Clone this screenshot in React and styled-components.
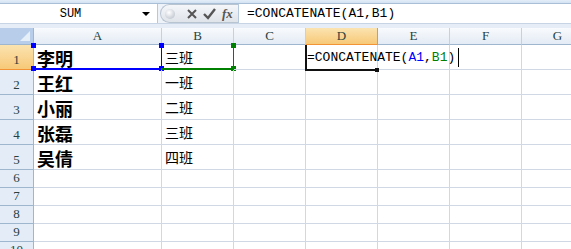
import React from "react";
import styled, { createGlobalStyle } from "styled-components";

const GlobalStyle = createGlobalStyle`
  * { margin: 0; padding: 0; box-sizing: border-box; }
  body { background: #ffffff; overflow: hidden; font-family: "Liberation Mono", monospace; }
`;

const Window = styled.div`
  width: 571px;
  height: 249px;
  overflow: hidden;
  background: #ffffff;
`;

const TopStrip = styled.div`
  height: 4px;
  background: linear-gradient(#e3edf8, #d3e2f3);
  border-bottom: 1px solid #a9bfd8;
`;

const FormulaBar = styled.div`
  display: flex;
  height: 20px;
  background: #eef3fa;
  border-bottom: 1px solid #c6d4e6;
`;

const NameBox = styled.div`
  position: relative;
  width: 158px;
  background: #ffffff;
  border-right: 1px solid #b6c8dd;
  display: flex;
  align-items: center;
  justify-content: center;
  padding-right: 16px;
  font-family: "Liberation Mono", monospace;
  font-size: 12px;
  color: #000;
`;

const DropArrow = styled.span`
  position: absolute;
  right: 7px;
  top: 8px;
  width: 0;
  height: 0;
  border-left: 4px solid transparent;
  border-right: 4px solid transparent;
  border-top: 4px solid #000;
`;

const ButtonPill = styled.div`
  width: 78px;
  margin-left: 2px;
  display: flex;
  align-items: center;
  gap: 5px;
  padding-left: 4px;
  background: linear-gradient(#f4f6f9, #dfe4ea);
  border: 1px solid #b9c4d1;
  border-right: none;
  border-radius: 10px 0 0 10px;
`;

const Knob = styled.span`
  width: 10px;
  height: 10px;
  border-radius: 50%;
  background: radial-gradient(circle at 40% 35%, #ffffff, #c9ced6 70%, #a7afba);
`;

const FxText = styled.span`
  font-family: "Liberation Serif", serif;
  font-style: italic;
  font-weight: bold;
  font-size: 13px;
  color: #555;
  margin-left: 1px;
`;

const FormulaInput = styled.div`
  flex: 1;
  background: #ffffff;
  border-left: 1px solid #b6c8dd;
  display: flex;
  align-items: center;
  padding-left: 8px;
  font-family: "Liberation Mono", monospace;
  font-size: 13px;
  color: #000;
`;

const Spacer = styled.div`
  height: 4px;
  background: #e6edf6;
`;

const Grid = styled.div`
  display: grid;
  grid-template-columns: 34px 128px repeat(6, 72px);
  grid-template-rows: 17px repeat(5, 25px) repeat(5, 18px);
`;

const ColHead = styled.div`
  display: flex;
  align-items: center;
  justify-content: center;
  font-family: "Liberation Serif", serif;
  font-size: 13px;
  color: #27413e;
  border-right: 1px solid ${(p) => (p.$sel ? "#f29436" : "#c5d1e0")};
  border-bottom: 1px solid ${(p) => (p.$sel ? "#f29436" : "#9eb6ce")};
  background: ${(p) =>
    p.$sel
      ? "linear-gradient(#fbe3b0, #f7c978)"
      : "linear-gradient(#f8fafd, #e4ebf5)"};
`;

const Corner = styled.div`
  position: relative;
  border-right: 1px solid #9eb6ce;
  border-bottom: 1px solid #9eb6ce;
  background: #b7cde9;
  &::after {
    content: "";
    position: absolute;
    right: 3px;
    bottom: 3px;
    border-left: 10px solid transparent;
    border-bottom: 10px solid #e6eef8;
  }
`;

const RowHead = styled.div`
  display: flex;
  align-items: flex-end;
  justify-content: center;
  padding-bottom: 1px;
  font-family: "Liberation Serif", serif;
  font-size: 13px;
  color: #27413e;
  border-right: 1px solid #9eb6ce;
  border-bottom: 1px solid ${(p) => (p.$sel ? "#f29436" : "#9eb6ce")};
  background: ${(p) =>
    p.$sel ? "linear-gradient(#fbe3b0, #f7c978)" : "#e4ecf7"};
`;

const Cell = styled.div`
  position: relative;
  display: flex;
  align-items: center;
  padding-left: 3px;
  border-right: 1px solid #d0d7e5;
  border-bottom: 1px solid #d0d7e5;
  white-space: nowrap;
  overflow: visible;
`;

const Name = styled.span`
  font-family: "Noto Sans CJK SC", sans-serif;
  font-weight: bold;
  font-size: 18px;
  line-height: 1;
  color: #000;
  margin-top: 2px;
`;

const Klass = styled.span`
  font-family: "Noto Sans CJK SC", sans-serif;
  font-size: 14px;
  line-height: 1;
  color: #000;
`;

const RefBox = styled.div`
  position: absolute;
  left: -1px;
  top: -1px;
  right: -1px;
  bottom: -1px;
  border-bottom: 2px solid ${(p) => p.$c};
  border-left: ${(p) => (p.$left ? `1px solid ${p.$c}` : "none")};
  border-right: ${(p) => (p.$right ? `1px solid ${p.$c}` : "none")};
  pointer-events: none;
`;

const Handle = styled.span`
  position: absolute;
  width: 5px;
  height: 5px;
  background: ${(p) => p.$c};
  ${(p) => (p.$top ? "top: -1px;" : "bottom: -3px;")}
  ${(p) => (p.$l ? "left: -2px;" : "right: -3px;")}
`;

const Editor = styled.div`
  position: absolute;
  left: -1px;
  top: 0;
  bottom: -2px;
  width: 70px;
  border-left: 2px solid #111;
  border-bottom: 2px solid #111;
  z-index: 2;
`;

const EditText = styled.span`
  position: absolute;
  left: 1px;
  top: 3px;
  font-family: "Liberation Mono", monospace;
  font-size: 13px;
  color: #000;
  z-index: 3;
  display: flex;
  align-items: center;
  &::after {
    content: "";
    width: 1px;
    height: 19px;
    background: #000;
    margin-left: 3px;
  }
`;

const Ref = styled.span`
  color: ${(p) => p.$c};
`;

const FillHandle = styled.span`
  position: absolute;
  left: 69px;
  bottom: -3px;
  width: 4px;
  height: 4px;
  background: #111;
  z-index: 3;
`;

const cols = ["A", "B", "C", "D", "E", "F", "G"];
const rows = [
  ["李明", "三班"],
  ["王红", "一班"],
  ["小丽", "二班"],
  ["张磊", "三班"],
  ["吴倩", "四班"],
  [],
  [],
  [],
  [],
  [],
];

const Icons = () => (
  <ButtonPill>
    <Knob />
    <svg width="12" height="12" viewBox="0 0 12 12" style={{ marginLeft: 6 }}>
      <path d="M2 2 L10 10 M10 2 L2 10" stroke="#555" strokeWidth="2" />
    </svg>
    <svg width="13" height="12" viewBox="0 0 13 12">
      <path d="M1 6 L5 10 L12 1" stroke="#555" strokeWidth="2.4" fill="none" />
    </svg>
    <FxText>fx</FxText>
  </ButtonPill>
);

export default function App() {
  return (
    <Window>
      <GlobalStyle />
      <TopStrip />
      <FormulaBar>
        <NameBox>
          SUM
          <DropArrow />
        </NameBox>
        <Icons />
        <FormulaInput>=CONCATENATE(A1,B1)</FormulaInput>
      </FormulaBar>
      <Spacer />
      <Grid>
        <Corner />
        {cols.map((c) => (
          <ColHead key={c} $sel={c === "D"}>
            {c}
          </ColHead>
        ))}
        {rows.map((r, i) => (
          <React.Fragment key={i}>
            <RowHead $sel={i === 0}>{i + 1}</RowHead>
            {cols.map((c, j) => (
              <Cell key={c}>
                {j === 0 && r[0] && <Name>{r[0]}</Name>}
                {j === 1 && r[1] && <Klass>{r[1]}</Klass>}
                {i === 0 && j === 0 && (
                  <RefBox $c="#0000ff" $right>
                    <Handle $c="#0000ff" $top $l />
                    <Handle $c="#0000ff" $top />
                    <Handle $c="#0000ff" $l />
                    <Handle $c="#0000ff" />
                  </RefBox>
                )}
                {i === 0 && j === 1 && (
                  <RefBox $c="#008000" $right>
                    <Handle $c="#008000" $top />
                    <Handle $c="#008000" />
                  </RefBox>
                )}
                {i === 0 && j === 3 && (
                  <>
                    <Editor />
                    <FillHandle />
                    <EditText>
                      =CONCATENATE(<Ref $c="#0000ff">A1</Ref>,
                      <Ref $c="#008000">B1</Ref>)
                    </EditText>
                  </>
                )}
              </Cell>
            ))}
          </React.Fragment>
        ))}
      </Grid>
    </Window>
  );
}
